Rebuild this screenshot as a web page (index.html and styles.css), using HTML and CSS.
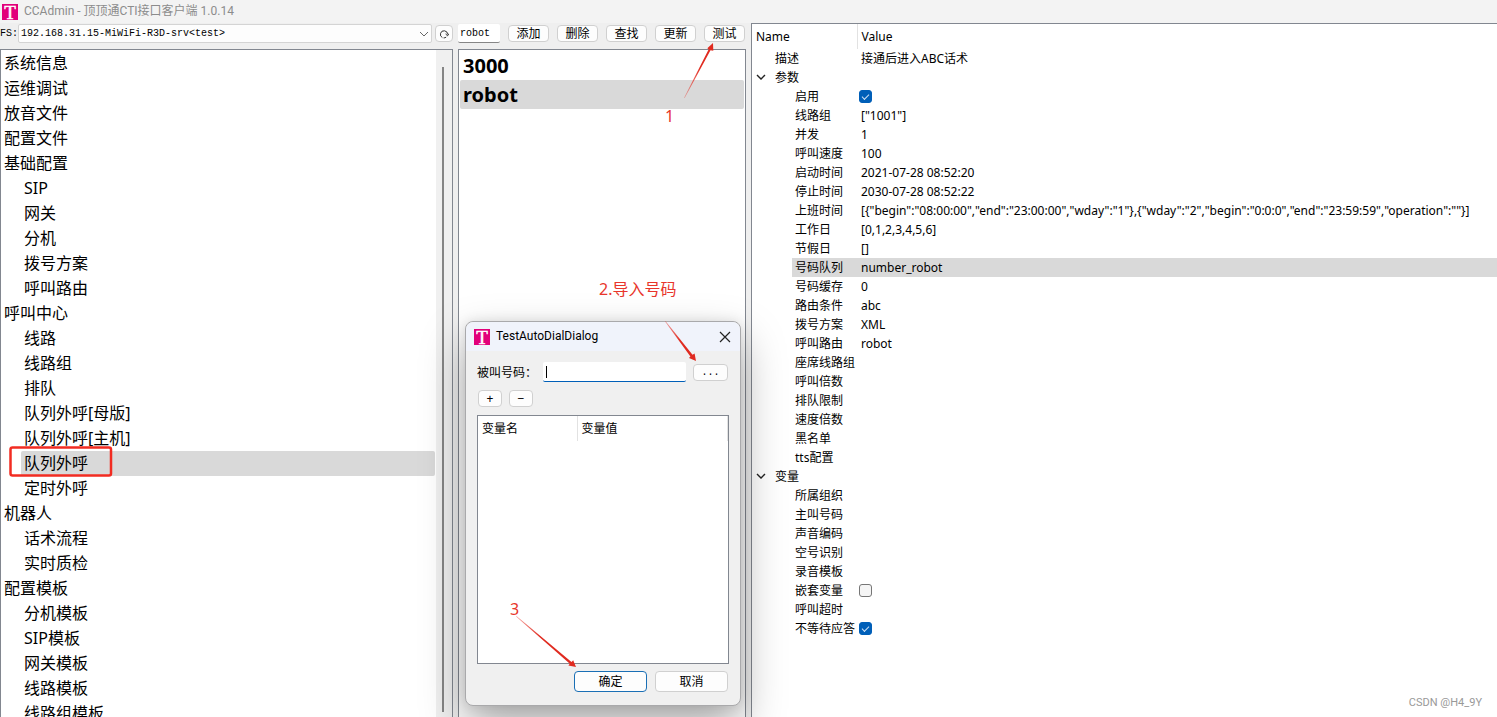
FILE: index.html
```html
<!DOCTYPE html>
<html lang="zh-CN">
<head>
<meta charset="utf-8">
<title>CCAdmin</title>
<link rel="stylesheet" href="styles.css">
</head>
<body>
<header class="titlebar"><span class="logo">T</span><span>CCAdmin - 顶顶通CTI接口客户端 1.0.14</span></header>
<main class="workspace">
  <section class="pane">
    <div class="toolbar server-bar">
      <label for="server">FS:</label>
      <div class="select-wrap">
        <select id="server" class="select"><option>192.168.31.15-MiWiFi-R3D-srv&lt;test&gt;</option></select>
        <svg class="caret" viewBox="0 0 10 6"><path d="M1 1l4 4 4-4"/></svg>
      </div>
      <button class="btn refresh" aria-label="刷新"><svg viewBox="0 0 10 10"><path d="M3.4 8.6A3.6 3.6 0 1 1 8.6 5.4M4.6 8.9a3.6 3.6 0 0 0 2.6-.8"/><path d="M6.6 5l2 1.8L9.900 4.600"/></svg></button>
    </div>
    <div class="frame nav-frame">
      <ul class="nav">
        <li>系统信息</li><li>运维调试</li><li>放音文件</li><li>配置文件</li>
        <li>基础配置
          <ul><li>SIP</li><li>网关</li><li>分机</li><li>拨号方案</li><li>呼叫路由</li></ul></li>
        <li>呼叫中心
          <ul><li>线路</li><li>线路组</li><li>排队</li><li>队列外呼[母版]</li><li>队列外呼[主机]</li><li class="selected">队列外呼</li><li>定时外呼</li></ul></li>
        <li>机器人
          <ul><li>话术流程</li><li>实时质检</li></ul></li>
        <li>配置模板
          <ul><li>分机模板</li><li>SIP模板</li><li>网关模板</li><li>线路模板</li><li>线路组模板</li></ul></li>
      </ul>
      <div class="scrollbar"><div class="thumb"></div></div>
    </div>
  </section>

  <section class="pane">
    <div class="toolbar queue-bar">
      <input class="field" aria-label="名称" value="robot">
      <button class="btn">添加</button><button class="btn">删除</button><button class="btn">查找</button><button class="btn">更新</button><button class="btn">测试</button>
    </div>
    <ul class="frame queue">
      <li>3000</li>
      <li class="selected">robot</li>
    </ul>
  </section>

  <section class="frame props">
    <table class="prop-table">
      <colgroup><col class="col-name"><col></colgroup>
      <thead><tr><th>Name</th><th>Value</th></tr></thead>
      <tbody>
        <tr class="top"><td><span>描述</span></td><td>接通后进入ABC话术</td></tr>
        <tr class="top"><td><button class="twist" aria-label="折叠参数"><svg viewBox="0 0 10 6"><path d="M1 1l4 4 4-4"/></svg></button><span>参数</span></td><td></td></tr>
        <tr><td><label for="p-on">启用</label></td><td><input id="p-on" class="check" type="checkbox" checked></td></tr>
        <tr><td><span>线路组</span></td><td>["1001"]</td></tr>
        <tr><td><span>并发</span></td><td>1</td></tr>
        <tr><td><span>呼叫速度</span></td><td>100</td></tr>
        <tr><td><span>启动时间</span></td><td>2021-07-28 08:52:20</td></tr>
        <tr><td><span>停止时间</span></td><td>2030-07-28 08:52:22</td></tr>
        <tr><td><span>上班时间</span></td><td>[{"begin":"08:00:00","end":"23:00:00","wday":"1"},{"wday":"2","begin":"0:0:0","end":"23:59:59","operation":""}]</td></tr>
        <tr><td><span>工作日</span></td><td>[0,1,2,3,4,5,6]</td></tr>
        <tr><td><span>节假日</span></td><td>[]</td></tr>
        <tr class="selected"><td><span>号码队列</span></td><td>number_robot</td></tr>
        <tr><td><span>号码缓存</span></td><td>0</td></tr>
        <tr><td><span>路由条件</span></td><td>abc</td></tr>
        <tr><td><span>拨号方案</span></td><td>XML</td></tr>
        <tr><td><span>呼叫路由</span></td><td>robot</td></tr>
        <tr><td><span>座席线路组</span></td><td></td></tr>
        <tr><td><span>呼叫倍数</span></td><td></td></tr>
        <tr><td><span>排队限制</span></td><td></td></tr>
        <tr><td><span>速度倍数</span></td><td></td></tr>
        <tr><td><span>黑名单</span></td><td></td></tr>
        <tr><td><span>tts配置</span></td><td></td></tr>
        <tr class="top"><td><button class="twist" aria-label="折叠变量"><svg viewBox="0 0 10 6"><path d="M1 1l4 4 4-4"/></svg></button><span>变量</span></td><td></td></tr>
        <tr><td><span>所属组织</span></td><td></td></tr>
        <tr><td><span>主叫号码</span></td><td></td></tr>
        <tr><td><span>声音编码</span></td><td></td></tr>
        <tr><td><span>空号识别</span></td><td></td></tr>
        <tr><td><span>录音模板</span></td><td></td></tr>
        <tr><td><label for="p-nest">嵌套变量</label></td><td><input id="p-nest" class="check" type="checkbox"></td></tr>
        <tr><td><span>呼叫超时</span></td><td></td></tr>
        <tr><td><label for="p-wait">不等待应答</label></td><td><input id="p-wait" class="check" type="checkbox" checked></td></tr>
      </tbody>
    </table>
  </section>
</main>

<div class="dialog" role="dialog" aria-labelledby="dlg-title">
  <div class="dialog-title"><span class="logo">T</span><span id="dlg-title">TestAutoDialDialog</span>
    <button class="close" aria-label="关闭"><svg viewBox="0 0 12 12"><path d="M1 1l10 10M11 1L1 11"/></svg></button></div>
  <div class="dialog-body">
    <div class="callee"><label for="callee">被叫号码：</label><div class="callee-field"><input id="callee" class="field active"><i class="cursor"></i></div><button class="btn browse">...</button></div>
    <div class="plusminus"><button class="btn">+</button><button class="btn">−</button></div>
    <div class="frame vars"><table><thead><tr><th>变量名</th><th>变量值</th></tr></thead></table></div>
    <div class="actions"><button class="btn primary">确定</button><button class="btn">取消</button></div>
  </div>
</div>

<div class="marks">
  <svg width="760" height="717" viewBox="0 0 760 717">
    <defs>
      <linearGradient id="g1" gradientUnits="userSpaceOnUse" x1="685" y1="97" x2="700" y2="67"><stop offset="0" stop-color="#e8352b" stop-opacity=".4"/><stop offset="1" stop-color="#e02b20"/></linearGradient>
      <linearGradient id="g2" gradientUnits="userSpaceOnUse" x1="665" y1="321" x2="680" y2="341"><stop offset="0" stop-color="#e8352b" stop-opacity=".4"/><stop offset="1" stop-color="#e02b20"/></linearGradient>
      <linearGradient id="g3" gradientUnits="userSpaceOnUse" x1="516" y1="616" x2="540" y2="637"><stop offset="0" stop-color="#e8352b" stop-opacity=".4"/><stop offset="1" stop-color="#e02b20"/></linearGradient>
    </defs>
    <path fill="url(#g1)" d="M684.1 97.800L708.700 49.300L707.300 48.200L713 43L713.300 50.800L710.500 50.200L684.700 98.100Z"/>
    <path fill="url(#g2)" d="M665 321.500L690.400 356.400L689 358L696 361L694.600 353.600L692.500 354.800L665.500 321Z"/>
    <path fill="url(#g3)" d="M516 616.600L569.800 663.700L568.400 665.400L576 667L573.200 660.200L571.500 662L516.500 616Z"/>
    <rect x="10.500" y="447.500" width="100.500" height="28" rx="2" fill="none" stroke="#f22c22" stroke-width="2.500"/>
  </svg>
  <span class="mark mark-1">1</span>
  <span class="mark mark-2">2.导入号码</span>
  <span class="mark mark-3">3</span>
</div>
<div class="watermark">CSDN @H4_9Y</div>
</body>
</html>
```
FILE: styles.css
```css
* { box-sizing: border-box; }
html, body { height: 100%; }
body {
  margin: 0;
  position: relative;
  display: flex;
  flex-direction: column;
  overflow: hidden;
  background: #efefef;
  color: #000;
  font: 12px/19px "Noto Sans", "Noto Sans CJK SC", sans-serif;
}
ul { list-style: none; margin: 0; padding: 0; }
button, input, select { font: inherit; color: inherit; margin: 0; }

.titlebar {
  flex: none;
  height: 23px;
  display: flex;
  align-items: center;
  gap: 6px;
  padding-left: 2px;
  background: #f3f3f3;
  color: #8c8c8c;
  font-family: Roboto, "Noto Sans CJK SC", sans-serif;
}
.logo {
  width: 16px;
  height: 16px;
  background: #e2007a;
  color: #fff;
  font: 19px/17px "Liberation Serif", serif;
  text-align: center;
  -webkit-text-stroke: 0.5px #fff;
}

.workspace {
  flex: 1;
  min-height: 0;
  display: grid;
  grid-template-columns: 453px 288px minmax(0, 1fr);
  gap: 5px;
}
.pane { display: flex; flex-direction: column; min-height: 0; min-width: 0; }
.frame { background: #fff; border: 1px solid #828790; border-bottom: 0; }
.toolbar {
  flex: none;
  height: 26px;
  display: flex;
  align-items: center;
  padding-bottom: 5px;
}
.server-bar { gap: 3px; font: 10px/18px "Liberation Mono", monospace; }
.server-bar label { width: 15px; white-space: nowrap; }
.select-wrap { flex: 1; display: grid; align-items: center; }
.select {
  grid-area: 1 / 1;
  appearance: none;
  width: 100%;
  height: 19px;
  padding: 0 20px 0 2px;
  border: 1px solid #d4d4d4;
  border-radius: 2px;
  background: #fdfdfd;
}
.caret { grid-area: 1 / 1; justify-self: end; width: 10px; height: 6px; margin-right: 3px; }
.caret path { fill: none; stroke: #666; }

.btn {
  height: 17px;
  padding: 0;
  border: 1px solid #d0d0d0;
  border-radius: 4px;
  background: #fdfdfd;
  line-height: 15px;
  text-align: center;
}
.refresh { width: 18px; display: grid; place-items: center; }
.refresh svg { width: 10px; height: 10px; }
.refresh path { fill: none; stroke: #333; }
.queue-bar { gap: 8px; padding-right: 1px; }
.queue-bar .btn { flex: 1; }
.field {
  width: 42px;
  height: 19px;
  padding: 0 2px;
  border: 0;
  border-bottom: 1px solid #868686;
  border-radius: 2px;
  background: #fff;
  font: 10px/18px "Liberation Mono", monospace;
}

.nav-frame { flex: 1; min-height: 0; display: flex; overflow: hidden; }
.nav { flex: 1; padding-top: 1px; font-size: 16px; line-height: 25px; }
.nav > li { padding-left: 3px; }
.nav ul { padding-left: 17px; }
.nav ul li { padding-left: 3px; }
.nav .selected { background: #d9d9d9; border-radius: 2px; margin-right: 1px; }
.scrollbar { width: 16px; padding: 17px 0 5px 6px; background: #f0f0f0; }
.thumb { width: 2px; height: 100%; background: #858585; }

.queue { flex: 1; font-size: 20px; font-weight: bold; line-height: 29px; padding: 1px; }
.queue li { padding-left: 3px; border-radius: 2px; }
.queue .selected { background: #d9d9d9; }

.props { border-right: 0; overflow: hidden; }
.prop-table { width: 100%; table-layout: fixed; border-collapse: collapse; }
.col-name { width: 105px; }
.prop-table th { height: 25px; padding: 0 4px; text-align: left; font-weight: normal; }
.prop-table th:first-child { border-right: 1px solid #e2e2e2; }
.prop-table td { height: 19px; padding: 0 0 0 4px; white-space: nowrap; }
.prop-table td:first-child { padding: 0 0 0 40px; }
.prop-table td:first-child span, .prop-table label { display: block; padding-left: 3px; }
.prop-table .top td:first-child { padding-left: 20px; position: relative; }
.prop-table .selected td:last-child, .prop-table .selected span { background: #d9d9d9; }
.twist {
  position: absolute;
  left: 4px;
  top: 4px;
  width: 10px;
  height: 10px;
  display: grid;
  place-items: center;
  padding: 0;
  border: 0;
  background: none;
}
.twist svg { width: 10px; height: 6px; }
.twist path { fill: none; stroke: #222; stroke-width: 1.4; }
.check {
  appearance: none;
  display: block;
  width: 13px;
  height: 13px;
  border: 1px solid #767676;
  border-radius: 3px;
  background: #f5f5f5;
  margin-left: -2px;
}
.check:checked { background: #005fb8; border-color: #005fb8; display: grid; place-items: center; }
.check:checked::before {
  content: "";
  width: 6px;
  height: 3px;
  margin-bottom: 2px;
  border: solid #cfe2f4;
  border-width: 0 0 1px 1px;
  transform: rotate(-45deg);
}

.dialog {
  position: absolute;
  left: 465px;
  top: 321px;
  width: 276px;
  border: 1px solid #a9a9ab;
  border-radius: 8px;
  background: #f0f0f0;
  box-shadow: 0 20px 44px rgba(0, 0, 0, .34), 0 0 12px rgba(0, 0, 0, .1);
}
.dialog-title {
  display: flex;
  align-items: center;
  gap: 6px;
  height: 29px;
  padding: 0 8px;
  border-radius: 8px 8px 0 0;
  background: #f0f3fb;
  font-family: Roboto, "Noto Sans CJK SC", sans-serif;
}
.close { margin-left: auto; width: 14px; height: 14px; padding: 1px; border: 0; background: none; display: grid; }
.close path { fill: none; stroke: #222; stroke-width: 1.2; }
.dialog-body { padding: 11px 11px 13px; }
.callee { display: flex; align-items: center; gap: 7px; padding-right: 1px; }
.callee label { width: 59px; white-space: nowrap; }
.callee-field { flex: 1; display: grid; align-items: center; }
.callee-field .field { grid-area: 1 / 1; width: 100%; height: 20px; }
.field.active { border-bottom: 1px solid #005fb8; }
.cursor { grid-area: 1 / 1; width: 1px; height: 12px; margin-left: 3px; background: #000; z-index: 1; }
.browse { width: 35px; font: 10px/15px "Liberation Mono", monospace; }
.plusminus { display: flex; gap: 7px; padding: 8px 1px; }
.plusminus .btn { width: 24px; }
.vars { height: 249px; border-bottom: 1px solid #828790; }
.vars table { width: 100%; table-layout: fixed; border-collapse: collapse; }
.vars th { height: 25px; padding: 0 4px; text-align: left; font-weight: normal; border-right: 1px solid #e2e2e2; }
.vars th:first-child { width: 99px; }
.actions { display: flex; justify-content: flex-end; gap: 8px; padding: 7px 1px 0 0; }
.actions .btn { width: 73px; height: 21px; line-height: 19px; }
.actions .primary { border-color: #1a6fb5; }

.marks { position: absolute; left: 0; top: 0; pointer-events: none; color: #e8352b; font-size: 16px; line-height: 20px; }
.marks svg { display: block; }
.mark { position: absolute; white-space: nowrap; }
.mark-1 { left: 665px; top: 106px; }
.mark-2 { left: 599px; top: 279px; }
.mark-3 { left: 510px; top: 599px; }
.watermark { position: absolute; right: 15px; bottom: 5px; color: #999; font: 11px/19px Roboto, sans-serif; }
```
